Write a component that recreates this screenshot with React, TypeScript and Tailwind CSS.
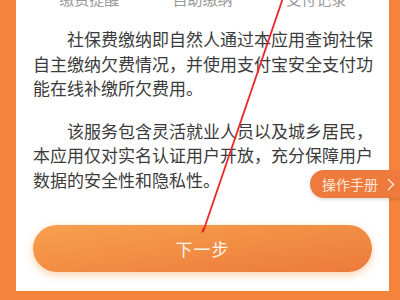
import React from "react"

const font = { fontFamily: '"Noto Sans CJK SC", "Noto Sans", sans-serif' }

export default function App() {
  return (
    <div className="relative h-[300px] w-[400px] overflow-hidden bg-[#f4833b]" style={font}>
      <div className="ml-[16px] h-[300px] w-[373px] bg-white">
        <div className="-mt-[9px] flex text-[15px] leading-[16px] text-[#9a9a9a]">
          <div className="w-[146px] text-center pl-[1px]">缴费提醒</div>
          <div className="w-[82px] text-center">自助缴纳</div>
          <div className="w-[146px] text-center">支付记录</div>
        </div>
        <div className="ml-[17px] mt-[20px] w-[345px] text-[17px] leading-[24.5px] text-[#3b3b3b]">
          <p className="indent-[34px]">社保费缴纳即自然人通过本应用查询社保自主缴纳欠费情况，并使用支付宝安全支付功能在线补缴所欠费用。</p>
          <p className="mt-[18px] indent-[34px]">该服务包含灵活就业人员以及城乡居民，本应用仅对实名认证用户开放，充分保障用户数据的安全性和隐私性。</p>
        </div>
        <div className="ml-[17px] mt-[33px] flex h-[47px] w-[339px] items-center justify-center rounded-full bg-gradient-to-br from-[#f7a04d] to-[#ec7a3b] text-[17px] tracking-[1px] text-[#fff4ea] shadow-[0_3px_8px_rgba(247,160,77,0.45)]">
          下一步
        </div>
      </div>
      <div className="absolute left-[310px] top-[170px] flex h-[28px] w-[100px] items-center rounded-l-full bg-[#ef7a3d] pl-[12px] text-[14px] text-[#fde7d6] shadow-[0_2px_3px_rgba(0,0,0,0.12)]">
        <span>操作手册</span>
        <svg className="ml-[9px]" width="8" height="13" viewBox="0 0 8 13">
          <path d="M1 1l5.5 5.5L1 12" fill="none" stroke="#fde7d6" strokeWidth="1.4" />
        </svg>
      </div>
      <svg className="absolute left-0 top-0" width="400" height="300" viewBox="0 0 400 300">
        <line x1="283" y1="-2" x2="203" y2="232" stroke="#e8262a" strokeWidth="1.8" />
        <path d="M201 234l1.5-6 2.5 1z" fill="#e8262a" />
      </svg>
    </div>
  )
}
